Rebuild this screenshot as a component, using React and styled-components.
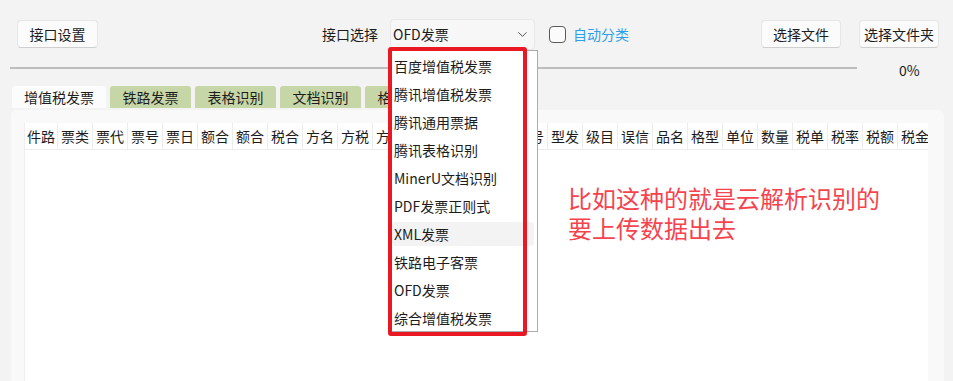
import React from 'react';
import styled, { createGlobalStyle } from 'styled-components';
import { ChevronDown } from 'lucide-react';

const GlobalStyle = createGlobalStyle`
  html, body {
    margin: 0;
    padding: 0;
    background: #f3f3f3;
    font-family: "Noto Sans CJK SC", "Noto Sans", sans-serif;
    color: #1c1c1c;
  }
`;

const Page = styled.div`
  position: relative;
  width: 953px;
  height: 381px;
  overflow: hidden;
  background: #f3f3f3;
  font-size: 14px;
`;

const Toolbar = styled.div`
  display: flex;
  align-items: center;
  height: 34px;
  padding: 17px 14px 0 17px;
`;

const Button = styled.button`
  height: 28px;
  width: ${p => p.w || 80}px;
  margin-left: ${p => p.ml || '0'};
  padding: 0;
  background: #fbfbfb;
  border: 1px solid #e6e6e6;
  border-bottom-color: #cfcfcf;
  border-radius: 4px;
  font-family: inherit;
  font-size: 14px;
  color: #1c1c1c;
  display: flex;
  align-items: center;
  justify-content: center;
`;

const Label = styled.span`
  margin-left: 224px;
  line-height: 20px;
`;

const Select = styled.div`
  margin-left: 12px;
  width: 145px;
  height: 31px;
  display: flex;
  align-items: center;
  justify-content: space-between;
  padding: 0 4px 0 2px;
  box-sizing: border-box;
  background: #f7f7f7;
  border: 1px solid #e8e8e8;
  border-radius: 4px;
  color: #1c1c1c;
`;

const Check = styled.span`
  margin-left: 14px;
  width: 15px;
  height: 15px;
  border: 1.5px solid #5a5a5a;
  border-radius: 4px;
  background: #fbfbfb;
`;

const CheckText = styled.span`
  margin-left: 7px;
  color: #2ba0ea;
`;

const ProgressRow = styled.div`
  display: flex;
  align-items: center;
  height: 24px;
  margin-top: 5px;
  padding-left: 10px;
`;

const ProgressLine = styled.div`
  width: 847px;
  height: 2px;
  background: #bdbdbd;
`;

const Percent = styled.span`
  margin-left: 42px;
  margin-top: 3px;
`;

const Tabs = styled.div`
  display: flex;
  gap: 4px;
  margin-top: 6px;
  padding-left: 12px;
`;

const Tab = styled.div`
  height: 22px;
  width: ${p => p.w}px;
  display: flex;
  align-items: center;
  justify-content: center;
  background: ${p => (p.active ? '#fcfcfc' : '#c6d6a6')};
  border-radius: 3px 3px 0 0;
  color: #1c1c1c;
`;

const Panel = styled.div`
  margin: 2px 0 0 11px;
  width: 933px;
  height: 280px;
  box-sizing: border-box;
  background: #f9f9f9;
  border-radius: 6px 6px 0 0;
  padding: 13px 16px 0 13px;
`;

const Table = styled.div`
  height: 100%;
  background: #fff;
  border-left: 1px solid #eeeeee;
  overflow: hidden;
`;

const HeaderRow = styled.div`
  display: flex;
  gap: 1px;
  height: 26px;
  background: #ececec;
  border-bottom: 1px solid #ececec;
`;

const HeadCell = styled.div`
  flex: 0 0 ${p => p.w}px;
  display: flex;
  align-items: center;
  justify-content: center;
  overflow: hidden;
  white-space: nowrap;
  background: #fff;
  font-size: 14px;
`;

const Dropdown = styled.div`
  position: absolute;
  left: 388px;
  top: 50px;
  width: 150px;
  height: 282px;
  box-sizing: border-box;
  background: #fff;
  border: 1px solid #ababab;
  padding: 3px 3px 1px;
  display: flex;
  flex-direction: column;
  gap: 4px;
`;

const Option = styled.div`
  flex: 0 0 24px;
  padding-left: 2px;
  display: flex;
  align-items: center;
  border-radius: 4px;
  background: ${p => (p.hover ? '#f3f3f3' : 'transparent')};
  color: #1c1c1c;
`;

const RedBox = styled.div`
  position: absolute;
  left: 388px;
  top: 47px;
  width: 139px;
  height: 289px;
  box-sizing: border-box;
  border: 4px solid #ea1822;
  border-radius: 3px;
`;

const Note = styled.div`
  position: absolute;
  left: 568px;
  top: 183px;
  font-size: 24px;
  line-height: 30px;
  color: #f5444e;
`;

const columns = [
  '件路', '票类', '票代', '票号', '票日', '额合', '额合', '税合', '方名', '方税',
  '方名', '方税', '验码', '器编', '器号', '型发', '级目', '误信', '品名', '格型',
  '单位', '数量', '税单', '税率', '税额', '税金',
];

const options = [
  '百度增值税发票', '腾讯增值税发票', '腾讯通用票据', '腾讯表格识别', 'MinerU文档识别',
  'PDF发票正则式', 'XML发票', '铁路电子客票', 'OFD发票', '综合增值税发票',
];

export default function App() {
  return (
    <Page>
      <GlobalStyle />
      <Toolbar>
        <Button w={81}>接口设置</Button>
        <Label>接口选择</Label>
        <Select>
          <span>OFD发票</span>
          <ChevronDown size={15} color="#555" strokeWidth={1.6} />
        </Select>
        <Check />
        <CheckText>自动分类</CheckText>
        <Button ml="auto">选择文件</Button>
        <Button ml="18px">选择文件夹</Button>
      </Toolbar>
      <ProgressRow>
        <ProgressLine />
        <Percent>0%</Percent>
      </ProgressRow>
      <Tabs>
        <Tab active w={94}>增值税发票</Tab>
        <Tab w={81}>铁路发票</Tab>
        <Tab w={81}>表格识别</Tab>
        <Tab w={81}>文档识别</Tab>
        <Tab w={81}>格式转换</Tab>
      </Tabs>
      <Panel>
        <Table>
          <HeaderRow>
            {columns.map((c, i) => (
              <HeadCell key={i} w={i === 0 ? 32 : 34}>
                <span>{c}</span>
              </HeadCell>
            ))}
          </HeaderRow>
        </Table>
      </Panel>
      <Dropdown>
        {options.map(o => (
          <Option key={o} hover={o === 'XML发票'}>{o}</Option>
        ))}
      </Dropdown>
      <RedBox />
      <Note>
        比如这种的就是云解析识别的
        <br />
        要上传数据出去
      </Note>
    </Page>
  );
}
